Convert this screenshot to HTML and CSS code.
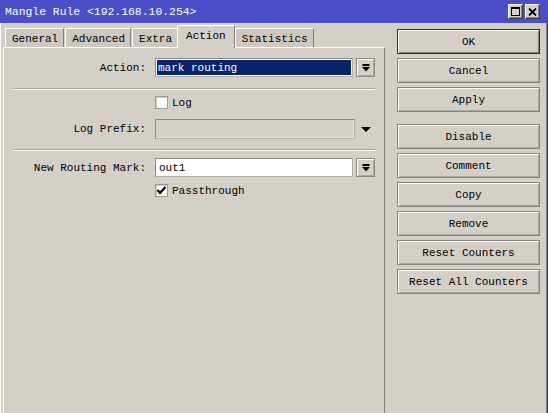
FILE: index.html
```html
<!DOCTYPE html>
<html lang="en">
<head>
<meta charset="utf-8">
<title>Mangle Rule</title>
<link rel="stylesheet" href="styles.css">
</head>
<body>
<div class="window">
  <div class="titlebar">
    <span class="title">Mangle Rule &lt;192.168.10.254&gt;</span>
    <div class="caption-buttons">
      <div class="cap-btn">
        <svg width="9" height="9" viewBox="0 0 9 9"><rect x="0.5" y="0.5" width="8" height="8" fill="none" stroke="#000"/><rect x="0" y="0" width="9" height="2" fill="#000"/></svg>
      </div>
      <div class="cap-btn">
        <svg width="9" height="8" viewBox="0 0 9 8"><path d="M1 0.5 L8 7.5 M8 0.5 L1 7.5" stroke="#000" stroke-width="1.8" fill="none"/></svg>
      </div>
    </div>
  </div>

  <div class="frame">
    <div class="main">
      <div class="tabs">
        <div class="tab">General</div>
        <div class="tab">Advanced</div>
        <div class="tab">Extra</div>
        <div class="tab active">Action</div>
        <div class="tab">Statistics</div>
      </div>

      <div class="panel">
        <div class="row">
          <span class="label">Action:</span>
          <div class="field"><span class="selected">mark routing</span></div>
          <div class="combo-btn">
            <svg width="8" height="8" viewBox="0 0 8 8"><rect x="0.5" y="0" width="7" height="2" fill="#000"/><polygon points="0,3 8,3 4,7.5" fill="#000"/></svg>
          </div>
        </div>

        <div class="sep"></div>

        <div class="check-row">
          <span class="checkbox"></span>
          <span>Log</span>
        </div>

        <div class="row row-tall">
          <span class="label">Log Prefix:</span>
          <div class="field field-wide disabled"></div>
          <svg class="drop-arrow" width="10" height="5" viewBox="0 0 10 5"><polygon points="0,0 10,0 5,5" fill="#000"/></svg>
        </div>

        <div class="sep sep-lower"></div>

        <div class="row row-after-sep">
          <span class="label">New Routing Mark:</span>
          <div class="field"><span class="value">out1</span></div>
          <div class="combo-btn">
            <svg width="8" height="8" viewBox="0 0 8 8"><rect x="0.5" y="0" width="7" height="2" fill="#000"/><polygon points="0,3 8,3 4,7.5" fill="#000"/></svg>
          </div>
        </div>

        <div class="check-row check-row-close">
          <span class="checkbox">
            <svg width="11" height="11" viewBox="0 0 11 11"><polyline points="1.5,5 4,8 9.5,2" fill="none" stroke="#000" stroke-width="2.2"/></svg>
          </span>
          <span>Passthrough</span>
        </div>
      </div>
    </div>

    <div class="side">
      <div class="btn default">OK</div>
      <div class="btn">Cancel</div>
      <div class="btn">Apply</div>
      <div class="btn group-start">Disable</div>
      <div class="btn">Comment</div>
      <div class="btn">Copy</div>
      <div class="btn">Remove</div>
      <div class="btn">Reset Counters</div>
      <div class="btn">Reset All Counters</div>
    </div>
  </div>
</div>
</body>
</html>
```

FILE: styles.css
```css
* {
  box-sizing: border-box;
}

html,
body {
  margin: 0;
  padding: 0;
}

body {
  width: 548px;
  height: 413px;
  overflow: hidden;
  background: #d4d0c8;
  font-family: "Liberation Mono", "DejaVu Sans Mono", monospace;
  font-size: 11px;
  color: #000;
}

.window {
  width: 548px;
  height: 413px;
  display: flex;
  flex-direction: column;
}

/* Title bar */
.titlebar {
  height: 23px;
  flex: none;
  background: #4a4fc7;
  color: #fff;
  display: flex;
  align-items: center;
  padding: 0 8px 0 5px;
}

.title {
  font-size: 11.4px;
}

.caption-buttons {
  margin-left: auto;
  display: flex;
  gap: 2px;
}

.cap-btn {
  width: 15px;
  height: 15px;
  background: #d4d0c8;
  border: 1px solid;
  border-color: #fff #404040 #404040 #fff;
  box-shadow: inset -1px -1px #808080;
  display: flex;
  align-items: center;
  justify-content: center;
}

/* Window body */
.frame {
  flex: 1;
  display: flex;
  padding: 2px 0 0 3px;
  box-shadow: inset 1px 0 #fff, inset -1px 0 #404040, inset -2px 0 #808080;
}

.main {
  width: 382px;
  display: flex;
  flex-direction: column;
}

/* Tabs */
.tabs {
  height: 22px;
  flex: none;
  display: flex;
  align-items: flex-end;
  padding-left: 2px;
}

.tab {
  height: 19px;
  padding: 2px 5px 0 6px;
  margin-right: 1px;
  background: #cdc9c1;
  border-top: 1px solid #fff;
  border-left: 1px solid #fff;
  border-right: 1px solid #808080;
  display: flex;
  align-items: center;
  white-space: nowrap;
}

.tab.active {
  position: relative;
  z-index: 1;
  height: 23px;
  margin: 0 0 -1px -2px;
  padding: 0 8px 2px;
  background: #d4d0c8;
}

/* Tab page */
.panel {
  flex: 1;
  border-top: 1px solid #fff;
  border-left: 1px solid #fff;
  border-right: 1px solid #808080;
  padding-top: 10px;
}

.row {
  display: flex;
  align-items: center;
  height: 19px;
}

.row-tall {
  height: 20px;
  margin-top: 10px;
}

.row-after-sep {
  margin-top: 7px;
}

.label {
  width: 142px;
  margin-right: 9px;
  text-align: right;
  white-space: nowrap;
}

.field {
  width: 198px;
  height: 100%;
  border: 1px solid;
  border-color: #8a8a8a #b4b0a8 #b4b0a8 #8a8a8a;
  background: #fff;
  padding: 1px;
  display: flex;
  align-items: center;
}

.field-wide {
  width: 200px;
}

.field.disabled {
  background: #d4d0c8;
  box-shadow: inset -1px -1px #e8e6e0;
}

.selected {
  flex: 1;
  height: 100%;
  background: #0a246a;
  color: #fff;
  padding-left: 1px;
  display: flex;
  align-items: center;
}

.value {
  padding-left: 2px;
}

.combo-btn {
  width: 19px;
  height: 19px;
  margin-left: 3px;
  background: #d4d0c8;
  border: 1px solid #8a8a8a;
  box-shadow: inset 1px 1px #fff, inset -1px -1px #aca89f;
  display: flex;
  align-items: center;
  justify-content: center;
}

.drop-arrow {
  margin-left: 6px;
}

.sep {
  margin: 11px 0 0 9px;
  width: 362px;
  height: 2px;
  border-top: 1px solid #aaa69e;
  border-bottom: 1px solid #fff;
}

.sep-lower {
  margin-top: 10px;
}

.check-row {
  margin: 6px 0 0 151px;
  height: 13px;
  display: flex;
  align-items: center;
  gap: 4px;
}

.check-row-close {
  margin-top: 7px;
}

.checkbox {
  width: 13px;
  height: 13px;
  flex: none;
  background: #fff;
  border: 1px solid #9a9a9a;
  box-shadow: inset 1px 1px #d0ccc4;
  display: flex;
  align-items: center;
  justify-content: center;
}

/* Command buttons */
.side {
  margin-left: 12px;
  width: 143px;
  padding-top: 4px;
  display: flex;
  flex-direction: column;
  gap: 4px;
}

.btn {
  height: 25px;
  flex: none;
  background: #d4d0c8;
  border: 1px solid #858585;
  box-shadow: inset 1px 1px #fff, inset -1px -1px #aca89f;
  display: flex;
  align-items: center;
  justify-content: center;
  white-space: nowrap;
}

.btn.default {
  border-color: #2c2c2c;
  box-shadow: inset 1px 1px #fff, inset -1px -1px #808080;
}

.btn.group-start {
  margin-top: 8px;
}
```
